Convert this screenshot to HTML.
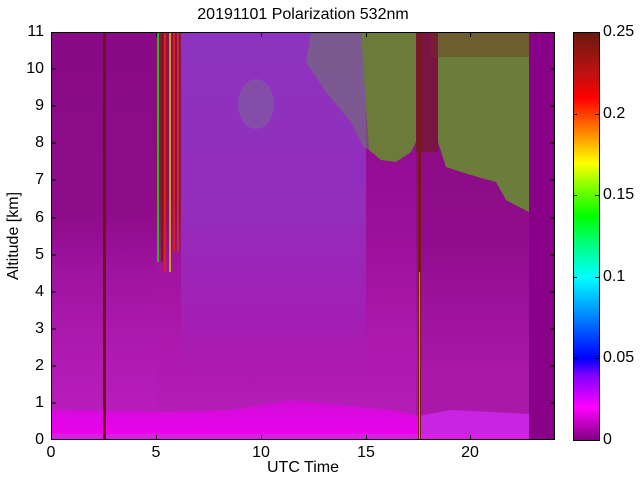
<!DOCTYPE html>
<html><head><style>
body{margin:0;width:640px;height:480px;background:#fff;position:relative;overflow:hidden;font-family:"Liberation Sans",sans-serif;color:#000}
.t{position:absolute;font-size:16px;line-height:16px}
.yl{position:absolute;width:42px;text-align:right;font-size:16px;line-height:16px;left:2px}
.xl{position:absolute;width:30px;text-align:center;font-size:16px;line-height:16px;top:445px}
.cl{position:absolute;left:603px;font-size:16px;line-height:16px}
</style></head><body>
<div class="t" style="left:0;width:606px;text-align:center;top:7px">20191101 Polarization 532nm</div>
<div class="t" style="left:-36px;top:228px;width:100px;text-align:center;transform:rotate(-90deg)">Altitude [km]</div>
<div class="t" style="left:253px;width:100px;text-align:center;top:460px">UTC Time</div>

<svg style="position:absolute;left:51px;top:32px" width="504" height="408" viewBox="0 0 504 408">
<defs>
<linearGradient id="g0" x1="0" y1="0" x2="0" y2="1">
<stop offset="0" stop-color="#8c0c8c"/><stop offset="0.45" stop-color="#980f98"/><stop offset="0.75" stop-color="#ad18ad"/><stop offset="0.92" stop-color="#b41cb6"/></linearGradient>
<linearGradient id="g1" x1="0" y1="0" x2="0" y2="1">
<stop offset="0" stop-color="#880a86"/><stop offset="0.45" stop-color="#8e0c8a"/><stop offset="0.6" stop-color="#a014a2"/><stop offset="0.8" stop-color="#b01ab2"/><stop offset="0.92" stop-color="#b81cba"/></linearGradient>
<linearGradient id="g2" x1="0" y1="0" x2="0" y2="1">
<stop offset="0" stop-color="#8c34c0"/><stop offset="0.45" stop-color="#942cbc"/><stop offset="0.72" stop-color="#a41eb4"/><stop offset="0.9" stop-color="#b01ab0" stop-opacity="0"/></linearGradient>
<linearGradient id="gb" x1="0" y1="0" x2="0" y2="1">
<stop offset="0" stop-color="#d00cd4"/><stop offset="1" stop-color="#f000f4"/></linearGradient>
<linearGradient id="gr" x1="0" y1="0" x2="0" y2="1">
<stop offset="0" stop-color="#8a0a82"/><stop offset="0.5" stop-color="#900c8c"/><stop offset="0.85" stop-color="#aa18aa"/></linearGradient>
<linearGradient id="gs" x1="0" y1="0" x2="0" y2="1">
<stop offset="0" stop-color="#8c1250"/><stop offset="0.55" stop-color="#8c1250"/><stop offset="0.75" stop-color="#8c1250" stop-opacity="0"/></linearGradient>
</defs>
<rect width="504" height="408" fill="url(#g0)"/>
<rect width="105" height="408" fill="url(#g1)"/>
<rect x="130" width="185" height="408" fill="url(#g2)"/>
<rect x="365" width="115" height="408" fill="url(#gr)"/>
<!-- stripes 5-6h -->
<rect x="105" width="25" height="300" fill="url(#gs)"/>
<rect x="106" width="2" height="230" fill="#30b030"/>
<rect x="110" width="2" height="230" fill="#801818"/>
<rect x="113" width="2" height="240" fill="#e02010"/>
<rect x="118" width="2" height="240" fill="#c0a020"/>
<rect x="122" width="2" height="220" fill="#e01818"/>
<rect x="126" width="2" height="220" fill="#c03030"/>
<!-- 9-10h patch -->
<ellipse cx="205" cy="72" rx="18" ry="25" fill="#7a6a90" opacity="0.5"/>
<!-- cloud regions -->
<polygon points="260,0 365,0 365,60 355,110 340,125 325,120 312,115 300,90 275,60 255,30" fill="#6e7a6a" opacity="0.55"/>
<polygon points="310,0 370,0 370,100 360,120 345,130 330,128 318,118" fill="#6c7a3c"/>
<rect x="365" width="22" height="120" fill="#7a1440"/>
<polygon points="387,0 478,0 478,180 470,176 455,168 445,150 430,146 410,140 395,135 387,110" fill="#6c7c3a"/>
<rect x="380" y="0" width="98" height="25" fill="#703420" opacity="0.4"/>
<!-- bottom band -->
<polygon points="0,378 120,380 180,378 240,368 280,372 340,378 368,384 368,408 0,408" fill="url(#gb)"/>
<polygon points="368,384 400,378 440,380 478,382 478,408 368,408" fill="#c824e4"/>
<rect x="0" y="402" width="478" height="6" fill="#d820e0"/>
<!-- vertical lines -->
<rect x="52" width="3" height="408" fill="#6e1418"/>
<rect x="367" width="3" height="408" fill="#7a1818"/>
<rect x="368" y="240" width="1" height="168" fill="#70c040"/>
<!-- empty -->
<rect x="478" width="26" height="408" fill="#880088"/>
<!-- ticks -->
<g stroke="#000" stroke-width="1">
<path d="M0,0.5H504M0,407.5H504M0.5,0V408M503.5,0V408"/>
<path d="M105.5,408v-5M210.5,408v-5M315.5,408v-5M419.5,408v-5M105.5,0v5M210.5,0v5M315.5,0v5M419.5,0v5"/>
<path d="M504,371h-5M504,334h-5M504,297h-5M504,260h-5M504,223h-5M504,186h-5M504,148h-5M504,111h-5M504,74h-5M504,37h-5M0,371h5M0,334h5M0,297h5M0,260h5M0,223h5M0,186h5M0,148h5M0,111h5M0,74h5M0,37h5"/>
</g>
</svg>

<div style="position:absolute;left:573px;top:32px;width:25px;height:407px;border:1px solid #000;background:linear-gradient(to top,#800080 0%,#ff00ff 8%,#8000ff 16%,#0000ff 20%,#0080ff 30%,#00ffff 40%,#00ff80 48%,#00ff00 55%,#80ff00 62%,#ffff00 68%,#ff8000 76%,#ff0000 84%,#c01010 90%,#6a1a10 100%)"></div>
<svg style="position:absolute;left:573px;top:32px" width="27" height="409"><g stroke="#000"><path d="M0,82.5h4M0,163.5h4M0,245.5h4M0,326.5h4M22,82.5h4M22,163.5h4M22,245.5h4M22,326.5h4"/></g></svg>
<div class="cl" style="top:24px">0.25</div>
<div class="cl" style="top:106px">0.2</div>
<div class="cl" style="top:187px">0.15</div>
<div class="cl" style="top:269px">0.1</div>
<div class="cl" style="top:350px">0.05</div>
<div class="cl" style="top:432px">0</div>

<div class="yl" style="top:432px">0</div>
<div class="yl" style="top:395px">1</div>
<div class="yl" style="top:358px">2</div>
<div class="yl" style="top:321px">3</div>
<div class="yl" style="top:284px">4</div>
<div class="yl" style="top:247px">5</div>
<div class="yl" style="top:210px">6</div>
<div class="yl" style="top:172px">7</div>
<div class="yl" style="top:135px">8</div>
<div class="yl" style="top:98px">9</div>
<div class="yl" style="top:61px">10</div>
<div class="yl" style="top:24px">11</div>

<div class="xl" style="left:36px">0</div>
<div class="xl" style="left:141px">5</div>
<div class="xl" style="left:246px">10</div>
<div class="xl" style="left:351px">15</div>
<div class="xl" style="left:455px">20</div>
</body></html>
